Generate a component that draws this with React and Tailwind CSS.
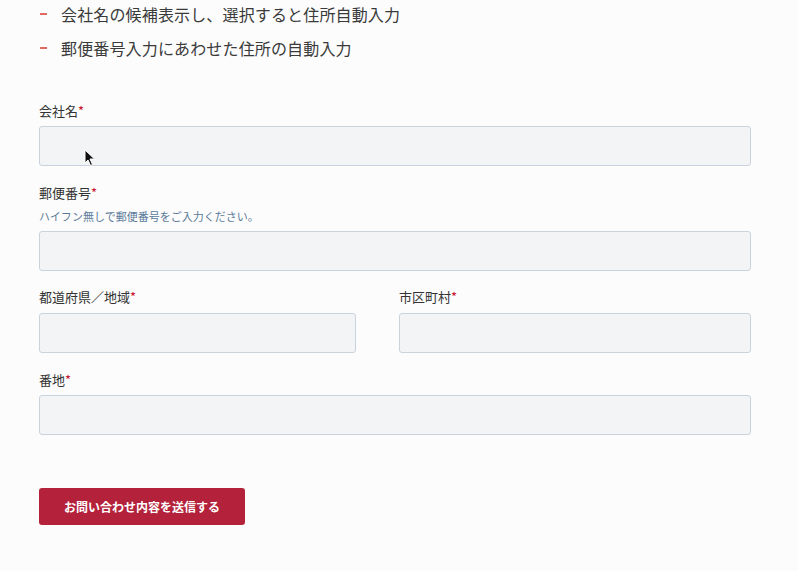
import React from 'react';

const font = { fontFamily: '"Noto Sans CJK JP", "Noto Sans", sans-serif' };

const Label = ({ children }) => (
    <div className="h-[20px] text-[13px] leading-[20px] text-[#333333]">
        {children}
        <span className="text-[#c8102e]">*</span>
    </div>
);

const Field = ({ className = '' }) => (
    <div className={`h-[40px] rounded-[3px] border border-[#c9d3de] bg-[#f3f4f6] ${className}`} />
);

const Cursor = () => (
    <svg className="absolute left-[84px] top-[149px]" width="12" height="18" viewBox="0 0 12 18">
        <path d="M1 1 L1 14 L4 11 L6.5 16.5 L8.5 15.5 L6 10 L10.5 10 Z" fill="#111" stroke="#fff" strokeWidth="1" />
    </svg>
);

export default function App() {
    return (
        <div className="relative min-h-[571px] bg-[#fcfcfc] px-[39px]" style={font}>
            <ul className="flex flex-col gap-[6px]">
                {['会社名の候補表示し、選択すると住所自動入力', '郵便番号入力にあわせた住所の自動入力'].map((t) => (
                    <li key={t} className="flex h-[28px] items-center text-[16px] tracking-[0.15px] text-[#3a3a3a]">
                        <span className="ml-[1px] mr-[14px] h-[2px] w-[7px] bg-[#e06a60]" />
                        {t}
                    </li>
                ))}
            </ul>

            <div className="mt-[39px] w-[712px]">
                <Label>会社名</Label>
                <Field className="mt-[5px]" />

                <div className="mt-[17px]">
                    <Label>郵便番号</Label>
                    <div className="mt-[5px] h-[16px] text-[11px] leading-[16px] text-[#5b7a99]">
                        ハイフン無しで郵便番号をご入力ください。
                    </div>
                    <Field className="mt-[7px]" />
                </div>

                <div className="mt-[16px] flex justify-between">
                    <div className="w-[317px]">
                        <Label>都道府県／地域</Label>
                        <Field className="mt-[6px]" />
                    </div>
                    <div className="w-[352px]">
                        <Label>市区町村</Label>
                        <Field className="mt-[6px]" />
                    </div>
                </div>

                <div className="mt-[17px]">
                    <Label>番地</Label>
                    <Field className="mt-[5px]" />
                </div>

                <button className="mt-[53px] h-[37px] w-[206px] rounded-[3px] bg-[#b3213a] text-[12px] font-bold text-white">
                    お問い合わせ内容を送信する
                </button>
            </div>

            <Cursor />
        </div>
    );
}
